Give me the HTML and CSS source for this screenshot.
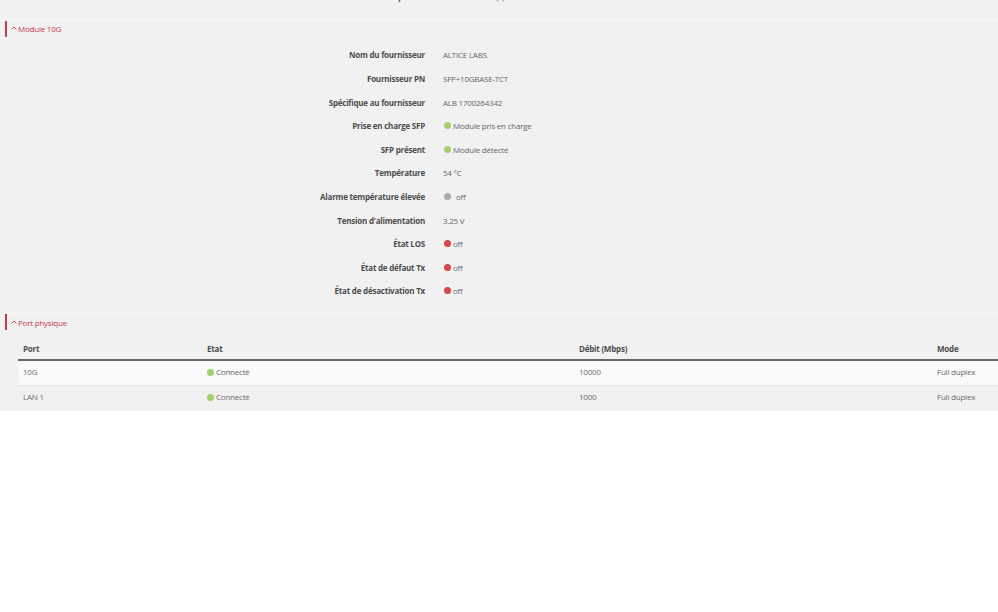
FILE: index.html
```html
<!DOCTYPE html>
<html lang="fr">
<head>
<meta charset="utf-8">
<title>Module 10G</title>
<link rel="stylesheet" href="styles.css">
</head>
<body>
<div class="page">
  <div class="section section-first">
    <div class="kv">
      <div class="kv-row"><div class="kv-label">Durée de vie prévue</div><div class="kv-value">86400 seconde(s)</div></div>
    </div>
  </div>

  <div class="section">
    <div class="section-head"><svg class="caret" viewBox="0 0 6 4" width="6" height="4"><path d="M0.6 3.4 L3 1 L5.4 3.4" fill="none" stroke="currentColor" stroke-width="0.9"/></svg>Module 10G</div>
    <div class="kv">
      <div class="kv-row"><div class="kv-label">Nom du fournisseur</div><div class="kv-value">ALTICE LABS</div></div>
      <div class="kv-row"><div class="kv-label">Fournisseur PN</div><div class="kv-value">SFP+10GBASE-TCT</div></div>
      <div class="kv-row"><div class="kv-label">Spécifique au fournisseur</div><div class="kv-value">ALB 1700264342</div></div>
      <div class="kv-row"><div class="kv-label">Prise en charge SFP</div><div class="kv-value"><span class="dot dot-green"></span>Module pris en charge</div></div>
      <div class="kv-row"><div class="kv-label">SFP présent</div><div class="kv-value"><span class="dot dot-green"></span>Module détecté</div></div>
      <div class="kv-row"><div class="kv-label">Température</div><div class="kv-value">54 °C</div></div>
      <div class="kv-row"><div class="kv-label">Alarme température élevée</div><div class="kv-value"><span class="dot dot-gray"></span>off</div></div>
      <div class="kv-row"><div class="kv-label">Tension d'alimentation</div><div class="kv-value">3.25 V</div></div>
      <div class="kv-row"><div class="kv-label">État LOS</div><div class="kv-value"><span class="dot dot-red"></span>off</div></div>
      <div class="kv-row"><div class="kv-label">État de défaut Tx</div><div class="kv-value"><span class="dot dot-red"></span>off</div></div>
      <div class="kv-row"><div class="kv-label">État de désactivation Tx</div><div class="kv-value"><span class="dot dot-red"></span>off</div></div>
    </div>
  </div>

  <div class="section section-last">
    <div class="section-head"><svg class="caret" viewBox="0 0 6 4" width="6" height="4"><path d="M0.6 3.4 L3 1 L5.4 3.4" fill="none" stroke="currentColor" stroke-width="0.9"/></svg>Port physique</div>
    <div class="table-wrap">
      <table class="ports">
        <colgroup>
          <col class="c-port"><col class="c-etat"><col class="c-debit"><col class="c-mode">
        </colgroup>
        <thead>
          <tr><th>Port</th><th>Etat</th><th>Débit (Mbps)</th><th>Mode</th></tr>
        </thead>
        <tbody>
          <tr class="odd"><td>10G</td><td><span class="dot dot-green"></span>Connecté</td><td>10000</td><td>Full duplex</td></tr>
          <tr><td>LAN 1</td><td><span class="dot dot-green"></span>Connecté</td><td>1000</td><td>Full duplex</td></tr>
        </tbody>
      </table>
    </div>
  </div>
</div>
</body>
</html>
```

FILE: styles.css
```css
html, body {
  margin: 0;
  padding: 0;
  background: #ffffff;
}
body {
  font-family: "Open Sans", "Liberation Sans", sans-serif;
  font-size: 8px;
  letter-spacing: -0.22px;
  color: #666666;
}
.page {
  background: #f1f1f1;
  margin-top: -15px;
}
.section {
  border-top: 1px solid #f8f8f8;
  padding-bottom: 10.5px;
}
.section-first {
  border-top: none;
  padding-bottom: 11px;
}
.section-last {
  padding-bottom: 1px;
}
.section-head {
  height: 16px;
  margin-left: 5px;
  border-left: 2px solid #c73a4d;
  padding-left: 4px;
  display: flex;
  align-items: center;
  color: #c73a4d;
}
.caret {
  margin-right: 1px;
  margin-top: -1px;
}
.kv {
  margin-top: 6.5px;
}
.section-first .kv {
  margin-top: 0;
}
.kv-row {
  height: 23.6px;
  display: grid;
  grid-template-columns: 425px 1fr;
  column-gap: 18px;
  align-items: center;
}
.kv-label {
  text-align: right;
  font-weight: 700;
  color: #4d4d4d;
}
.kv-value {
  display: flex;
  align-items: center;
  color: #666666;
}
.dot {
  display: inline-block;
  width: 7px;
  height: 7px;
  border-radius: 50%;
  margin-left: 1px;
  margin-right: 2px;
  flex: none;
}
.dot-green { background: #a3cf6f; }
.dot-red { background: #d9444d; }
.dot-gray { background: #ababab; margin-right: 5px; }
.table-wrap {
  margin-top: 6px;
  margin-left: 18px;
}
.ports {
  width: 100%;
  border-collapse: collapse;
  table-layout: fixed;
}
.c-port { width: 184px; }
.c-etat { width: 372px; }
.c-debit { width: 358px; }
.c-mode { width: auto; }
.ports th {
  height: 21px;
  padding: 2px 5px 0;
  text-align: left;
  font-weight: 700;
  color: #4d4d4d;
  border-bottom: 2px solid #666666;
}
.ports td {
  height: 21px;
  padding: 0 5px 3px;
  color: #6b6b6b;
  white-space: nowrap;
}
.ports tbody tr + tr td {
  border-top: 1px solid #e6e6e6;
}
.ports tr.odd td {
  background: #f9f9f9;
}
.ports td .dot {
  vertical-align: -1px;
  margin-left: 0;
}
```
